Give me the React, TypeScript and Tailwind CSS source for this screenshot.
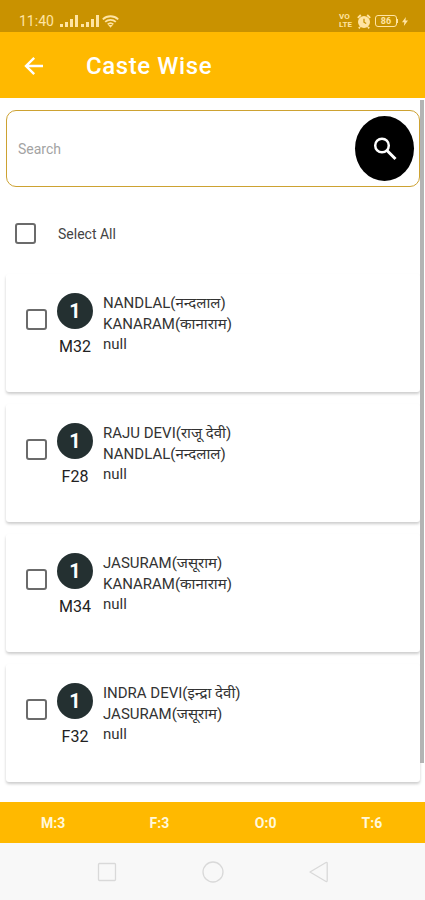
import { useState } from 'react';

type Voter = {
  id: number;
  name: string;
  relative: string;
  house: string;
  tag: string;
};

const voters: Voter[] = [
  { id: 1, name: 'NANDLAL(नन्दलाल)', relative: 'KANARAM(कानाराम)', house: 'null', tag: 'M32' },
  { id: 2, name: 'RAJU DEVI(राजू देवी)', relative: 'NANDLAL(नन्दलाल)', house: 'null', tag: 'F28' },
  { id: 3, name: 'JASURAM(जसूराम)', relative: 'KANARAM(कानाराम)', house: 'null', tag: 'M34' },
  { id: 4, name: 'INDRA DEVI(इन्द्रा देवी)', relative: 'JASURAM(जसूराम)', house: 'null', tag: 'F32' },
];

const totals = ['M:3', 'F:3', 'O:0', 'T:6'];

const checkboxClass =
  'block size-[21px] shrink-0 appearance-none rounded-[3px] border-2 border-[#6b6b6b] bg-white checked:bg-[#ffb900]';

function SignalIcon() {
  return (
    <svg width="18" height="13" viewBox="0 0 18 13" fill="currentColor" aria-hidden="true">
      <rect x="0" y="9" width="3" height="3" />
      <rect x="5" y="7" width="3" height="5" />
      <rect x="10" y="4" width="3" height="8" />
      <rect x="15" y="0" width="3" height="12" />
    </svg>
  );
}

function StatusBar() {
  return (
    <div className="flex h-8 items-end justify-between bg-[#c99200] pr-[17px] pb-[3px] pl-[19px] text-[#ffe4a3]">
      <div className="flex items-center">
        <span className="text-[14px] leading-4">11:40</span>
        <div className="ml-1.5 flex items-center gap-[3px]">
          <SignalIcon />
          <SignalIcon />
          <svg width="17" height="13" viewBox="0 0 17 13" fill="none" stroke="currentColor" strokeWidth="1.8" aria-hidden="true">
            <path d="M.8 4.3C5.2.2 11.8.2 16.2 4.3" />
            <path d="M3.2 6.9c3-2.8 7.6-2.8 10.6 0" />
            <path d="M5.7 9.4c1.6-1.5 4-1.5 5.6 0" />
            <path d="M6.2 10h4.6L8.5 12.8z" fill="currentColor" stroke="none" />
          </svg>
        </div>
      </div>
      <div className="flex items-center">
        <span className="flex flex-col text-[8px] leading-[8px] font-bold">
          <span>VO</span>
          <span>LTE</span>
        </span>
        <svg className="ml-[5px]" width="14" height="15" viewBox="0 0 14 15" fill="none" aria-hidden="true">
          <circle cx="7" cy="8" r="6" fill="currentColor" />
          <path d="M.8 3.8 3.8 1M13.2 3.8l-3-2.8M3 13l-1.2 1.4M11 13l1.2 1.4" stroke="currentColor" strokeWidth="1.8" />
          <path d="M7 4.8v3.4l2.2 1.3" stroke="#c99200" strokeWidth="1.3" />
        </svg>
        <span className="ml-1 flex h-3 w-[22px] items-center justify-center rounded-[3px] border border-[#ffe4a3] text-[9px] leading-none font-bold">
          86
        </span>
        <span className="h-1 w-px bg-[#ffe4a3]" />
        <svg className="ml-1" width="6" height="9" viewBox="0 0 6 9" fill="currentColor" aria-hidden="true">
          <path d="M3.8 0 0 5.2h2.3L1.9 9 6 3.6H3.5z" />
        </svg>
      </div>
    </div>
  );
}

function Header() {
  return (
    <header className="flex h-[66px] items-center bg-[#ffb900] pt-0.5 pl-6 text-white">
      <button type="button" aria-label="Back">
        <svg width="20" height="20" viewBox="0 0 20 20" fill="none" stroke="currentColor" strokeWidth="2.4" aria-hidden="true">
          <path d="M19 10H2.5M10.2 1.8 2 10l8.2 8.2" />
        </svg>
      </button>
      <h1 className="ml-[42px] text-[24px] leading-8 font-medium tracking-wide">Caste Wise</h1>
    </header>
  );
}

function SearchBar() {
  const [query, setQuery] = useState('');

  return (
    <form
      className="flex h-[77px] items-center rounded-[10px] border border-[#cda232] pr-[5px] pl-[11px]"
      onSubmit={(e) => e.preventDefault()}
    >
      <input
        type="text"
        aria-label="Search"
        placeholder="Search"
        value={query}
        onChange={(e) => setQuery(e.target.value)}
        className="min-w-0 flex-1 bg-transparent text-[14px] leading-5 outline-none placeholder:text-[#a3a3a3]"
      />
      <button
        type="submit"
        aria-label="Run search"
        className="flex h-[65px] w-[59px] items-center justify-center rounded-[50%] bg-black text-white"
      >
        <svg width="24" height="24" viewBox="0 0 24 24" fill="none" stroke="currentColor" aria-hidden="true">
          <circle cx="9" cy="8.5" r="6.8" strokeWidth="2.5" />
          <path d="m14 13.5 8.5 8.5" strokeWidth="3" />
        </svg>
      </button>
    </form>
  );
}

type VoterCardProps = {
  voter: Voter;
  checked: boolean;
  onToggle: () => void;
};

function VoterCard({ voter, checked, onToggle }: VoterCardProps) {
  return (
    <li className="flex h-[118px] items-start rounded-[3px] bg-white pt-[19px] pl-5 shadow-[0_2px_3px_rgba(0,0,0,0.2)]">
      <input
        type="checkbox"
        aria-label={voter.name}
        checked={checked}
        onChange={onToggle}
        className={`${checkboxClass} mt-4`}
      />
      <div className="ml-2 flex w-10 flex-col items-center">
        <span className="flex size-9 items-center justify-center rounded-full bg-[#243031] text-[20px] leading-none font-bold text-white">
          1
        </span>
        <span className="mt-2 text-[16px] leading-5 text-[#222]">{voter.tag}</span>
      </div>
      <div className="ml-2 text-[15px] text-[#333]">
        <p className="leading-[21px]">{voter.name}</p>
        <p className="leading-[21px]">{voter.relative}</p>
        <p className="leading-[18px]">{voter.house}</p>
      </div>
    </li>
  );
}

function SystemNav() {
  return (
    <nav className="flex h-[57px] items-center justify-center gap-[84px] bg-[#f8f8f8] text-[#d9d9d9]">
      <button type="button" aria-label="Recent apps">
        <svg width="22" height="22" viewBox="0 0 22 22" fill="none" stroke="currentColor" strokeWidth="1.3" aria-hidden="true">
          <rect x="2.5" y="2.5" width="17" height="17" rx="1" />
        </svg>
      </button>
      <button type="button" aria-label="Home">
        <svg width="22" height="22" viewBox="0 0 22 22" fill="none" stroke="currentColor" strokeWidth="1.3" aria-hidden="true">
          <circle cx="11" cy="11" r="10" />
        </svg>
      </button>
      <button type="button" aria-label="Back">
        <svg width="22" height="22" viewBox="0 0 22 22" fill="none" stroke="currentColor" strokeWidth="1.3" strokeLinejoin="round" aria-hidden="true">
          <path d="M2 11 18 1.5q1.2-.4 1.2 1v17q0 1.4-1.2 1z" />
        </svg>
      </button>
    </nav>
  );
}

export default function App() {
  const [selected, setSelected] = useState<number[]>([]);
  const allSelected = selected.length === voters.length;

  const toggle = (id: number) =>
    setSelected((prev) => (prev.includes(id) ? prev.filter((v) => v !== id) : [...prev, id]));

  return (
    <div className="flex min-h-screen flex-col bg-white font-['Roboto','Noto_Sans',sans-serif]">
      <StatusBar />
      <Header />

      <main className="relative flex-1 pt-3 pr-[5px] pb-[19px] pl-1.5">
        <SearchBar />

        <label className="mt-9 flex items-center gap-[22px] pl-[9px] text-[14px] leading-5 text-[#444]">
          <input
            type="checkbox"
            checked={allSelected}
            onChange={() => setSelected(allSelected ? [] : voters.map((v) => v.id))}
            className={checkboxClass}
          />
          Select All
        </label>

        <ul className="mt-[30px] flex flex-col gap-3">
          {voters.map((voter) => (
            <VoterCard
              key={voter.id}
              voter={voter}
              checked={selected.includes(voter.id)}
              onToggle={() => toggle(voter.id)}
            />
          ))}
        </ul>

        {/* Scroll indicator */}
        <div className="absolute top-0.5 right-px bottom-[39px] w-1 bg-[#b4b4b4]" />
      </main>

      <footer className="grid h-[41px] grid-cols-4 items-center bg-[#ffb900] pt-0.5 text-center text-[14px] font-bold text-[#fff8dc]">
        {totals.map((total) => (
          <span key={total}>{total}</span>
        ))}
      </footer>
      <SystemNav />
    </div>
  );
}
